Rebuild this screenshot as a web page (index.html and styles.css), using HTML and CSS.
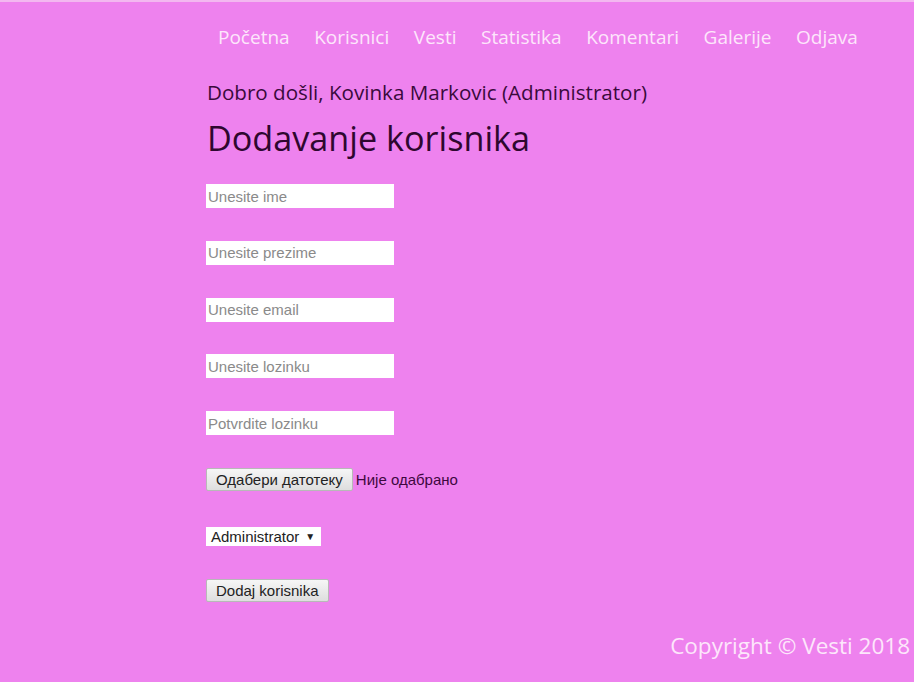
FILE: index.html
```html
<!DOCTYPE html>
<html>
<head>
<meta charset="utf-8">
<link rel="stylesheet" href="styles.css">
</head>
<body>
<div class="page">
  <nav class="nav">
    <a>Početna</a>
    <a>Korisnici</a>
    <a>Vesti</a>
    <a>Statistika</a>
    <a>Komentari</a>
    <a>Galerije</a>
    <a>Odjava</a>
  </nav>
  <main class="main">
    <p class="welcome">Dobro došli, Kovinka Markovic (Administrator)</p>
    <h1 class="title">Dodavanje korisnika</h1>
    <form class="form">
      <input class="field" type="text" placeholder="Unesite ime">
      <input class="field" type="text" placeholder="Unesite prezime">
      <input class="field" type="text" placeholder="Unesite email">
      <input class="field" type="password" placeholder="Unesite lozinku">
      <input class="field" type="password" placeholder="Potvrdite lozinku">
      <div class="file-row">
        <span class="btn">Одабери датотеку</span>
        <span class="file-status">Није одабрано</span>
      </div>
      <div class="select"><span>Administrator</span><span class="caret">▼</span></div>
      <div class="submit-row"><button type="button" class="btn">Dodaj korisnika</button></div>
    </form>
  </main>
  <footer class="footer">Copyright © Vesti 2018</footer>
</div>
</body>
</html>
```
FILE: styles.css
```css
html, body {
  margin: 0;
  padding: 0;
  background: #ffffff;
}
.page {
  background: #ee82ee;
  height: 682px;
  border-top: 2px solid #f3b8f0;
  box-sizing: border-box;
  display: flex;
  flex-direction: column;
  font-family: "Open Sans", sans-serif;
}
.nav {
  display: flex;
  gap: 24.6px;
  padding: 22px 0 0 218px;
  height: 26px;
  font-size: 19px;
  line-height: 26px;
  color: #fde6fb;
}
.nav a {
  color: #fde6fb;
}
.main {
  padding-left: 207px;
}
.welcome {
  margin: 28px 0 0;
  font-size: 20.6px;
  line-height: 28px;
  color: #3a0a3c;
}
.title {
  margin: 10px 0 0;
  font-weight: 400;
  font-size: 34.2px;
  line-height: 44px;
  color: #2e072f;
}
.form {
  display: flex;
  flex-direction: column;
  align-items: flex-start;
  margin-top: 24px;
  font-family: "Liberation Sans", Arial, sans-serif;
}
.field {
  width: 188px;
  height: 24px;
  box-sizing: border-box;
  border: none;
  background: #fff;
  margin: 0 0 32.75px -1px;
  padding: 0 2px;
  font-family: "Liberation Sans", Arial, sans-serif;
  font-size: 15px;
  color: #333;
  outline: none;
}
.field::placeholder {
  color: #8a8a8a;
}
.file-row {
  display: flex;
  align-items: center;
  margin: 0 0 36px -1px;
}
.btn {
  display: inline-block;
  box-sizing: border-box;
  height: 23px;
  padding: 0 9px;
  background: linear-gradient(#f6f6f6, #dedede);
  border: 1px solid #b8b8b8;
  border-radius: 2px;
  font-family: "Liberation Sans", Arial, sans-serif;
  font-size: 15px;
  line-height: 21px;
  color: #222;
}
.file-status {
  margin-left: 3px;
  font-size: 15px;
  color: #3e083f;
}
.select {
  display: flex;
  align-items: center;
  gap: 6px;
  height: 19px;
  margin: 0 0 33px -1px;
  padding: 0 6px 0 5px;
  background: #fff;
  font-size: 15px;
  line-height: 19px;
  color: #222;
}
.caret {
  font-size: 10px;
}
.submit-row {
  margin-left: -1px;
}
.footer {
  margin-top: auto;
  margin-bottom: 22px;
  text-align: right;
  padding-right: 4px;
  font-size: 22.5px;
  line-height: 28px;
  color: #fde6fb;
}
```
